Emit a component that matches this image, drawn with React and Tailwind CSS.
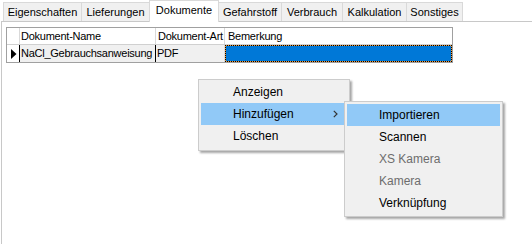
import React from "react";

const tabs = [
  { label: "Eigenschaften", w: "w-[79px]" },
  { label: "Lieferungen", w: "w-[69px]" },
  { label: "Dokumente", w: "w-[70px]", active: true },
  { label: "Gefahrstoff", w: "w-[64px]" },
  { label: "Verbrauch", w: "w-[62px]" },
  { label: "Kalkulation", w: "w-[65px]" },
  { label: "Sonstiges", w: "w-[57px]" },
];

function Tab({ label, w, active, first }) {
  if (active) {
    return (
      <div
        className={`${w} ${first ? "" : "-ml-px"} relative z-10 h-[22px] -mb-px bg-white border-l border-t border-r border-[#d9d9d9] flex items-center justify-center text-[11px] text-black pb-[2px]`}
      >
        {label}
      </div>
    );
  }
  return (
    <div
      className={`${w} ${first ? "" : "-ml-px"} h-[19px] bg-[#f0f0f0] border-l border-t border-r border-[#d9d9d9] flex items-center justify-center text-[11px] text-black`}
    >
      {label}
    </div>
  );
}

function MenuItem({ label, highlight, disabled, arrow }) {
  return (
    <div
      className={`h-[22px] flex items-center justify-between pl-[32px] pr-[9px] ${
        highlight ? "bg-[#91c9f7]" : ""
      } ${disabled ? "text-[#6d6d6d]" : "text-black"}`}
    >
      <span>{label}</span>
      {arrow && (
        <svg width="5" height="8" viewBox="0 0 5 8" className="block">
          <path d="M0.8 0.8 L4 4 L0.8 7.2" fill="none" stroke="#333" strokeWidth="1.2" />
        </svg>
      )}
    </div>
  );
}

export default function App() {
  return (
    <div className="relative w-[532px] h-[244px] overflow-hidden bg-white font-['Liberation_Sans',Arial,sans-serif]">
      {/* Tab strip */}
      <div className="flex items-end h-[21px] pl-[3px]">
        {tabs.map((t, i) => (
          <Tab key={t.label} {...t} first={i === 0} />
        ))}
      </div>

      {/* Tab panel */}
      <div className="ml-px h-[223px] border-t border-l border-[#c8c8c8] pt-[5px] pl-[4px]">
        {/* Grid */}
        <div className="w-[447px] border-l border-t border-r border-[#a0a0a0] text-[11px] tracking-[-0.25px] text-black">
          {/* Header */}
          <div className="flex h-[17px] border-b border-[#d0d0d0] bg-white">
            <div className="w-[13px] border-r border-[#d9d9d9]" />
            <div className="w-[136px] border-r border-[#d9d9d9] pl-[1px] flex items-center">
              Dokument-Name
            </div>
            <div className="w-[69px] border-r border-[#d9d9d9] pl-[2px] flex items-center">
              Dokument-Art
            </div>
            <div className="flex-1 pl-[3px] flex items-center">Bemerkung</div>
          </div>
          {/* Data row */}
          <div className="flex h-[18px] border-b border-[#a0a0a0]">
            <div className="w-[13px] border-r border-black bg-white flex items-center pl-[4px]">
              <svg width="6" height="10" viewBox="0 0 6 10" className="block">
                <path d="M0 0 L5.5 5 L0 10 Z" fill="#000" />
              </svg>
            </div>
            <div className="w-[136px] border-r border-black bg-[#f0f0f0] pl-[1px] flex items-center">
              NaCl_Gebrauchsanweisung
            </div>
            <div className="w-[69px] border-r border-[#d9d9d9] bg-[#f0f0f0] pl-[1px] flex items-center">
              PDF
            </div>
            <div className="flex-1 bg-[#f09a3a] border border-dotted border-black">
              <div className="h-full bg-[#0078d7]" />
            </div>
          </div>
        </div>
      </div>

      {/* Context menu */}
      <div className="absolute left-[198px] top-[79px] w-[152px] bg-[#f0f0f0] border border-[#cccccc] pt-[1px] pb-[3px] px-[2px] text-[12px] shadow-[2px_2px_2px_rgba(0,0,0,0.35)] z-20">
        <MenuItem label="Anzeigen" />
        <MenuItem label="Hinzufügen" highlight arrow />
        <MenuItem label="Löschen" />
      </div>

      {/* Submenu */}
      <div className="absolute left-[344px] top-[101px] w-[159px] bg-[#f0f0f0] border border-[#cccccc] py-[2px] px-[2px] text-[12px] shadow-[2px_2px_2px_rgba(0,0,0,0.35)] z-30">
        <MenuItem label="Importieren" highlight />
        <MenuItem label="Scannen" />
        <MenuItem label="XS Kamera" disabled />
        <MenuItem label="Kamera" disabled />
        <MenuItem label="Verknüpfung" />
      </div>
    </div>
  );
}
